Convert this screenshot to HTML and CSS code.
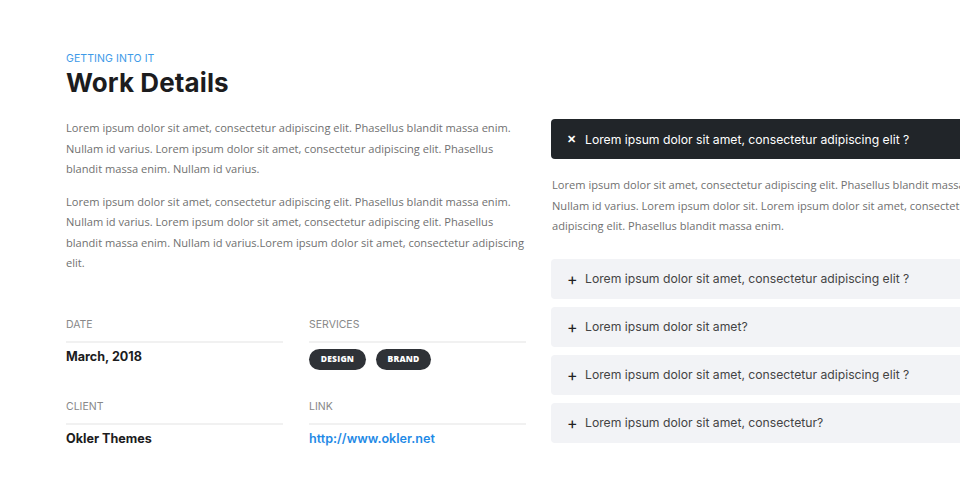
FILE: index.html
```html
<!DOCTYPE html>
<html lang="en">
<head>
<meta charset="utf-8">
<title>Work Details</title>
<link rel="stylesheet" href="styles.css">
</head>
<body>
<div class="page">
  <header class="intro">
    <p class="pre-title">GETTING INTO IT</p>
    <h2 class="title">Work Details</h2>
  </header>
  <div class="row">
    <div class="col-left">
      <p class="text">Lorem ipsum dolor sit amet, consectetur adipiscing elit. Phasellus blandit massa enim. Nullam id varius. Lorem ipsum dolor sit amet, consectetur adipiscing elit. Phasellus blandit massa enim. Nullam id varius.</p>
      <p class="text">Lorem ipsum dolor sit amet, consectetur adipiscing elit. Phasellus blandit massa enim. Nullam id varius. Lorem ipsum dolor sit amet, consectetur adipiscing elit. Phasellus blandit massa enim. Nullam id varius.Lorem ipsum dolor sit amet, consectetur adipiscing elit.</p>
      <div class="details">
        <div class="detail">
          <div class="label">DATE</div>
          <div class="value">March, 2018</div>
        </div>
        <div class="detail">
          <div class="label">SERVICES</div>
          <div class="value tags"><span class="tag">DESIGN</span><span class="tag">BRAND</span></div>
        </div>
        <div class="detail">
          <div class="label">CLIENT</div>
          <div class="value">Okler Themes</div>
        </div>
        <div class="detail">
          <div class="label">LINK</div>
          <div class="value"><a class="link" href="#">http://www.okler.net</a></div>
        </div>
      </div>
    </div>
    <div class="col-right">
      <div class="acc-item open">
        <div class="acc-head"><span class="acc-icon">&#x2715;</span><span>Lorem ipsum dolor sit amet, consectetur adipiscing elit ?</span></div>
        <p class="acc-body">Lorem ipsum dolor sit amet, consectetur adipiscing elit. Phasellus blandit massa enim. Nullam id varius. Lorem ipsum dolor sit. Lorem ipsum dolor sit amet, consectetur adipiscing elit. Phasellus blandit massa enim.</p>
      </div>
      <div class="acc-item">
        <div class="acc-head"><span class="acc-icon plus">+</span><span>Lorem ipsum dolor sit amet, consectetur adipiscing elit ?</span></div>
      </div>
      <div class="acc-item">
        <div class="acc-head"><span class="acc-icon plus">+</span><span>Lorem ipsum dolor sit amet?</span></div>
      </div>
      <div class="acc-item">
        <div class="acc-head"><span class="acc-icon plus">+</span><span>Lorem ipsum dolor sit amet, consectetur adipiscing elit ?</span></div>
      </div>
      <div class="acc-item">
        <div class="acc-head"><span class="acc-icon plus">+</span><span>Lorem ipsum dolor sit amet, consectetur?</span></div>
      </div>
    </div>
  </div>
</div>
</body>
</html>
```

FILE: styles.css
```css
html, body {
  margin: 0;
  padding: 0;
  background: #ffffff;
  overflow: hidden;
}
body {
  width: 960px;
  height: 500px;
  font-family: "Open Sans", "Liberation Sans", sans-serif;
}
.page {
  width: 1000px;
  padding: 52px 0 0 66px;
}
.intro { margin: 0; }
.pre-title {
  margin: 0;
  font-family: Inter, "Liberation Sans", sans-serif;
  font-size: 10.5px;
  line-height: 14px;
  color: #3d9ae8;
  letter-spacing: 0.1px;
}
.title {
  margin: 2px 0 0;
  font-family: Inter, "Liberation Sans", sans-serif;
  font-size: 26px;
  line-height: 30px;
  font-weight: 700;
  color: #1c1c1e;
  letter-spacing: 0.1px;
}
.row {
  display: grid;
  grid-template-columns: 462px 460px;
  column-gap: 23px;
  margin-top: 20px;
}
.text {
  margin: 0 0 12px;
  font-size: 11.1px;
  line-height: 20.5px;
  color: #707070;
}
.details {
  display: grid;
  grid-template-columns: 217px 217px;
  column-gap: 26px;
  row-gap: 30px;
  margin-top: 44px;
}
.label {
  font-family: Inter, "Liberation Sans", sans-serif;
  font-size: 10.5px;
  line-height: 14px;
  color: #888888;
  padding-bottom: 9px;
  border-bottom: 2px solid #f1f1f1;
}
.value {
  margin-top: 6px;
  font-family: Inter, "Liberation Sans", sans-serif;
  font-size: 12.6px;
  line-height: 16px;
  font-weight: 700;
  color: #1c1c1e;
}
.tags {
  display: flex;
  gap: 10px;
}
.tag {
  display: inline-flex;
  align-items: center;
  justify-content: center;
  height: 21px;
  border-radius: 11px;
  background: #2f3237;
  color: #ffffff;
  font-family: "Open Sans", "Liberation Sans", sans-serif;
  font-size: 8.5px;
  font-weight: 800;
  letter-spacing: 0.2px;
}
.tag:first-child { width: 57px; }
.tag:last-child { width: 55px; }
.link {
  color: #1f8ae6;
  text-decoration: none;
  font-weight: 600;
}
.col-right { padding-top: 1px; }
.acc-item { margin-bottom: 8px; }
.acc-item.open { margin-bottom: 22px; }
.acc-head {
  display: flex;
  align-items: center;
  height: 40px;
  padding-left: 16px;
  border-radius: 4px;
  background: #f2f3f6;
  color: #444444;
  font-family: Inter, "Liberation Sans", sans-serif;
  font-size: 12.2px;
}
.open .acc-head {
  background: #212529;
  color: #ffffff;
}
.acc-icon {
  width: 18px;
  font-size: 11px;
  font-weight: 700;
}
.acc-icon.plus {
  font-size: 16px;
  font-weight: 400;
  color: #222;
}
.acc-body {
  margin: 16px 0 0;
  padding-left: 1px;
  font-size: 11.1px;
  line-height: 20.5px;
  color: #707070;
}
```
